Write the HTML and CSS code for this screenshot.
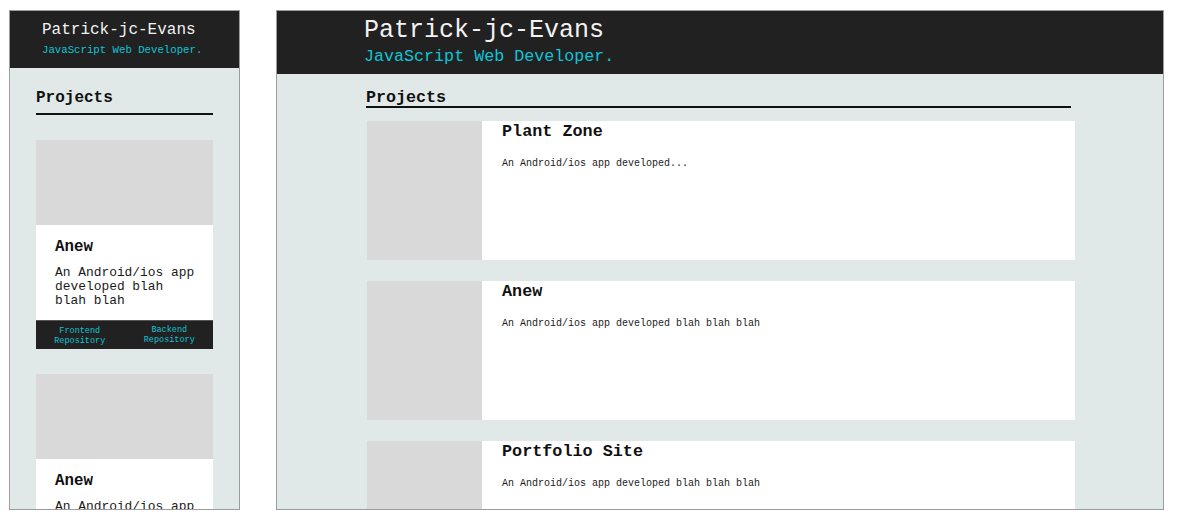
FILE: index.html
```html
<!DOCTYPE html>
<html>
<head>
<meta charset="utf-8">
<link rel="stylesheet" href="styles.css">
</head>
<body>
<div class="stage">
  <div class="frame mobile">
    <header class="m-header">
      <div class="m-title">Patrick-jc-Evans</div>
      <div class="m-sub">JavaScript Web Developer.</div>
    </header>
    <main class="m-content">
      <h2 class="m-heading">Projects</h2>
      <div class="m-card">
        <div class="m-img"></div>
        <div class="m-body">
          <h3 class="m-card-title">Anew</h3>
          <p class="m-desc">An Android/ios app developed blah blah blah</p>
        </div>
        <div class="m-foot">
          <a class="m-link">Frontend<br>Repository</a>
          <a class="m-link m-link-up">Backend<br>Repository</a>
        </div>
      </div>
      <div class="m-card">
        <div class="m-img"></div>
        <div class="m-body">
          <h3 class="m-card-title">Anew</h3>
          <p class="m-desc">An Android/ios app developed blah blah blah</p>
        </div>
      </div>
    </main>
  </div>
  <div class="frame desktop">
    <header class="d-header">
      <div class="d-title">Patrick-jc-Evans</div>
      <div class="d-sub">JavaScript Web Developer.</div>
    </header>
    <main class="d-content">
      <h2 class="d-heading">Projects</h2>
      <div class="d-card">
        <div class="d-img"></div>
        <div class="d-body">
          <h3 class="d-card-title">Plant Zone</h3>
          <p class="d-desc">An Android/ios app developed...</p>
        </div>
      </div>
      <div class="d-card">
        <div class="d-img"></div>
        <div class="d-body">
          <h3 class="d-card-title">Anew</h3>
          <p class="d-desc">An Android/ios app developed blah blah blah</p>
        </div>
      </div>
      <div class="d-card">
        <div class="d-img"></div>
        <div class="d-body">
          <h3 class="d-card-title">Portfolio Site</h3>
          <p class="d-desc">An Android/ios app developed blah blah blah</p>
        </div>
      </div>
    </main>
  </div>
</div>
</body>
</html>
```

FILE: styles.css
```css
* { box-sizing: border-box; }
html, body { margin: 0; padding: 0; background: #ffffff; }
body { font-family: "Liberation Mono", "DejaVu Sans Mono", monospace; color: #111; }
h2, h3, p { margin: 0; }

.stage {
  display: flex;
  gap: 36px;
  padding: 10px 0 0 9px;
}

.frame {
  height: 500px;
  border: 1px solid #9c9c9c;
  background: #e1e9e8;
  overflow: hidden;
  flex: none;
}
.mobile { width: 231px; }
.desktop { width: 888px; }

/* ---------- mobile ---------- */
.m-header {
  height: 57px;
  background: #212121;
  padding: 9px 0 0 32px;
}
.m-title {
  color: #f2f2f2;
  font-size: 16px;
  line-height: 20px;
}
.m-sub {
  color: #10c4d6;
  font-size: 10.7px;
  line-height: 21px;
}
.m-content {
  padding: 18px 26px 0 26px;
}
.m-heading {
  font-size: 16px;
  line-height: 20px;
  font-weight: bold;
  padding: 2px 0 5px 0;
  border-bottom: 2px solid #111;
  margin-bottom: 25px;
}
.m-card {
  background: #ffffff;
  margin-bottom: 25px;
}
.m-img {
  height: 85px;
  background: #d9d9d9;
}
.m-body {
  padding: 12px 12px 12px 19px;
}
.m-card-title {
  font-size: 15.8px;
  line-height: 20px;
  font-weight: bold;
}
.m-desc {
  margin-top: 9px;
  font-size: 12.9px;
  line-height: 14px;
  color: #1a1a1a;
}
.m-foot {
  height: 29px;
  background: #212121;
  border-top: 1px solid #555;
  display: flex;
}
.m-link {
  flex: 1;
  display: flex;
  align-items: center;
  justify-content: center;
  text-align: center;
  color: #10c4d6;
  font-size: 8.5px;
  line-height: 10px;
  padding-top: 2px;
}
.m-link-up { padding-top: 0; padding-left: 2px; }

/* ---------- desktop ---------- */
.d-header {
  height: 63px;
  background: #212121;
  padding: 6px 0 0 87px;
}
.d-title {
  color: #f2f2f2;
  font-size: 25px;
  line-height: 28px;
}
.d-sub {
  color: #10c4d6;
  font-size: 16.7px;
  line-height: 24px;
}
.d-content {
  padding: 12px 0 0 89px;
}
.d-heading {
  width: 705px;
  font-size: 16.7px;
  line-height: 16px;
  font-weight: bold;
  padding-top: 4px;
  border-bottom: 2px solid #111;
  margin-bottom: 13px;
}
.d-card {
  display: flex;
  width: 708px;
  height: 139px;
  margin: 0 0 21px 1px;
  background: #ffffff;
}
.d-img {
  width: 115px;
  flex: none;
  background: #d9d9d9;
}
.d-body {
  padding: 1px 0 0 20px;
}
.d-card-title {
  font-size: 16.8px;
  line-height: 19px;
  font-weight: bold;
}
.d-desc {
  margin-top: 16px;
  font-size: 10px;
  line-height: 14px;
  color: #1a1a1a;
}
```
